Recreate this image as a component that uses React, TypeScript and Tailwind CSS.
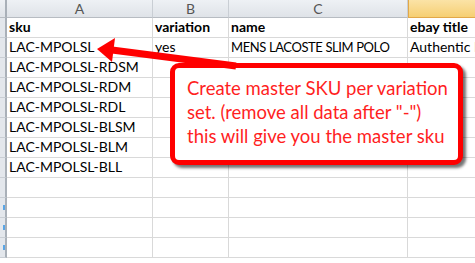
const rows: string[][] = [
  ['sku', 'variation', 'name', 'ebay title'],
  ['LAC-MPOLSL', 'yes', 'MENS LACOSTE SLIM POLO', 'Authentic L'],
  ['LAC-MPOLSL-RDSM', '', '', ''],
  ['LAC-MPOLSL-RDM', '', '', ''],
  ['LAC-MPOLSL-RDL', '', '', ''],
  ['LAC-MPOLSL-BLSM', '', '', ''],
  ['LAC-MPOLSL-BLM', '', '', ''],
  ['LAC-MPOLSL-BLL', '', '', ''],
  ['', '', '', ''],
  ['', '', '', ''],
  ['', '', '', ''],
  ['', '', '', ''],
];

const cols = ['A', 'B', 'C', 'D'];

const isCaps = (v: string) => v.length > 12 && v === v.toUpperCase() && !v.startsWith('LAC');

export default function App() {
  return (
    <div
      className="relative w-[475px] h-[263px] overflow-hidden bg-white"
      style={{ fontFamily: 'Lato, "Open Sans", sans-serif' }}
    >
      <div className="grid grid-cols-[7px_146px_76px_179px_240px] w-[648px]">
        {/* column headers */}
        <div className="h-[18px] bg-gradient-to-b from-[#eef1f5] to-[#dfe3e8] border-r-2 border-b border-r-[#a9b0b8] border-b-[#b7bcc2]" />
        {cols.map((c) => (
          <div
            key={c}
            className={
              c === 'D'
                ? 'h-[18px] flex items-center justify-center text-[14px] text-[#6b4e16] bg-gradient-to-b from-[#fbe3a6] to-[#f6cf72] border-b border-l border-[#e2a849]'
                : 'h-[18px] flex items-center justify-center text-[14px] text-[#555] bg-gradient-to-b from-[#eef1f5] to-[#dfe3e8] border-b border-r border-b-[#b7bcc2] border-r-[#c9ced4]'
            }
          >
            {c}
          </div>
        ))}

        {/* data rows */}
        {rows.map((r, i) => (
          <div key={i} className="contents">
            <div className="h-[20px] bg-[#e3e7ec] border-r-2 border-b border-r-[#a9b0b8] border-b-[#c9ced4] flex items-center justify-end">
              {i >= 9 && <span className="w-[2px] h-[5px] bg-[#5aa6e6]" />}
            </div>
            {r.map((v, j) => (
              <div
                key={j}
                className={`h-[20px] border-r border-b border-[#d9d9d9] pl-[2px] flex items-end pb-[1px] leading-[18px] text-black whitespace-nowrap overflow-hidden ${
                  i === 0 ? 'font-bold' : ''
                } ${isCaps(v) ? 'text-[13px] tracking-[-0.4px]' : 'text-[14px]'}`}
              >
                {v}
              </div>
            ))}
          </div>
        ))}
      </div>

      {/* callout box */}
      <div className="absolute left-[170px] top-[63px] w-[293px] h-[102px] rounded-[9px] border-[5px] border-[#ff0000] bg-white shadow-[3px_3px_3px_rgba(0,0,0,0.55)] pl-[12px] pt-[8px] text-[18.5px] leading-[24px] text-[#ff1f1f] whitespace-nowrap">
        <div>Create master SKU per variation</div>
        <div>set. (remove all data after "-")</div>
        <div>this will give you the master sku</div>
      </div>

      {/* pointer arrow */}
      <svg className="absolute left-0 top-0" width="475" height="263" viewBox="0 0 475 263">
        <line x1="112" y1="50" x2="236" y2="66" stroke="#ff0000" strokeWidth="7" />
        <polygon points="97,49 115,38 112,62" fill="#ff0000" />
      </svg>
    </div>
  );
}
